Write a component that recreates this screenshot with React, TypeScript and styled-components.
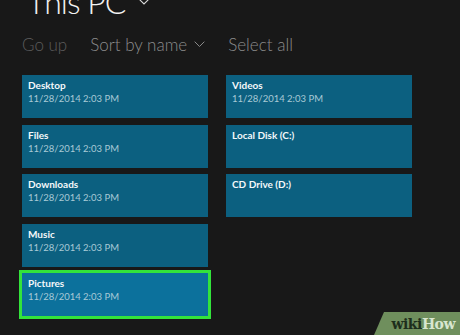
import * as React from 'react';
import styled, { createGlobalStyle } from 'styled-components';

const Global = createGlobalStyle`
	html, body {
		margin: 0;
		height: 100%;
		background: #181818;
		overflow: hidden;
	}
	#root {
		height: 100%;
	}
`;

const Page = styled.main`
	position: relative;
	height: 335px;
	display: flex;
	flex-direction: column;
	font-family: Lato, 'Open Sans', 'Liberation Sans', sans-serif;
	color: #fff;
	overflow: hidden;
`;

const Title = styled.h1`
	margin: -14px 0 0 27px;
	display: flex;
	align-items: center;
	gap: 13px;
	font-size: 32px;
	font-weight: 300;
	line-height: 1;
	letter-spacing: -1px;
	color: #f2f2f2;
`;

const Toolbar = styled.nav`
	display: flex;
	align-items: center;
	gap: 23px;
	margin: 16px 0 0 22px;
	font-size: 17px;
	font-weight: 300;
`;

const ToolItem = styled.span<{ $disabled?: boolean }>`
	display: flex;
	align-items: center;
	gap: 7px;
	color: ${(p) => (p.$disabled ? '#5c5c5c' : '#8c8c8c')};
`;

const Grid = styled.section`
	display: grid;
	grid-template-columns: 186px 186px;
	grid-template-rows: repeat(5, 43px);
	grid-auto-flow: column;
	column-gap: 18px;
	row-gap: 6.5px;
	margin: 20px 0 0 22px;
`;

const Tile = styled.div<{ $selected?: boolean }>`
	background: ${(p) => (p.$selected ? '#0c719c' : '#0c6080')};
	outline: ${(p) => (p.$selected ? '3px solid #33e43b' : 'none')};
	padding: 4px 6px;
	display: flex;
	flex-direction: column;
`;

const Name = styled.span`
	font-size: 10px;
	font-weight: 700;
	line-height: 13px;
	color: #f4f8fa;
`;

const Date = styled.span`
	font-size: 9.5px;
	line-height: 13px;
	color: #a9cad6;
`;

const Watermark = styled.div`
	position: absolute;
	right: 0;
	bottom: 0;
	width: 86px;
	height: 23px;
	background: #6f8f5d;
	clip-path: polygon(10px 0, 100% 0, 100% 100%, 0 100%);
	display: flex;
	align-items: center;
	justify-content: flex-end;
	padding-right: 5px;
	box-sizing: border-box;
	font-family: 'DejaVu Serif', 'Liberation Serif', serif;
	font-weight: 700;
	font-size: 14px;
	letter-spacing: -0.5px;
`;

const Wiki = styled.span`
	color: #1d2e1c;
`;

const How = styled.span`
	color: #d8e6cf;
`;

const Chevron = ({ size, color }: { size: number; color: string }) => (
	<svg width={size} height={size * 0.6} viewBox="0 0 10 6" fill="none">
		<path d="M0.6 0.6 L5 5 L9.4 0.6" stroke={color} strokeWidth={0.9} />
	</svg>
);

const items = [
	{ name: 'Desktop', date: '11/28/2014 2:03 PM' },
	{ name: 'Files', date: '11/28/2014 2:03 PM' },
	{ name: 'Downloads', date: '11/28/2014 2:03 PM' },
	{ name: 'Music', date: '11/28/2014 2:03 PM' },
	{ name: 'Pictures', date: '11/28/2014 2:03 PM', selected: true },
	{ name: 'Videos', date: '11/28/2014 2:03 PM' },
	{ name: 'Local Disk (C:)' },
	{ name: 'CD Drive (D:)' },
];

export default function App() {
	return (
		<Page>
			<Global />
			<Title>
				This PC
				<Chevron size={12} color="#dcdcdc" />
			</Title>
			<Toolbar>
				<ToolItem $disabled>Go up</ToolItem>
				<ToolItem>
					Sort by name
					<Chevron size={11} color="#8c8c8c" />
				</ToolItem>
				<ToolItem>Select all</ToolItem>
			</Toolbar>
			<Grid>
				{items.map((item) => (
					<Tile key={item.name} $selected={item.selected}>
						<Name>{item.name}</Name>
						{item.date && <Date>{item.date}</Date>}
					</Tile>
				))}
			</Grid>
			<Watermark>
				<Wiki>wiki</Wiki>
				<How>How</How>
			</Watermark>
		</Page>
	);
}
